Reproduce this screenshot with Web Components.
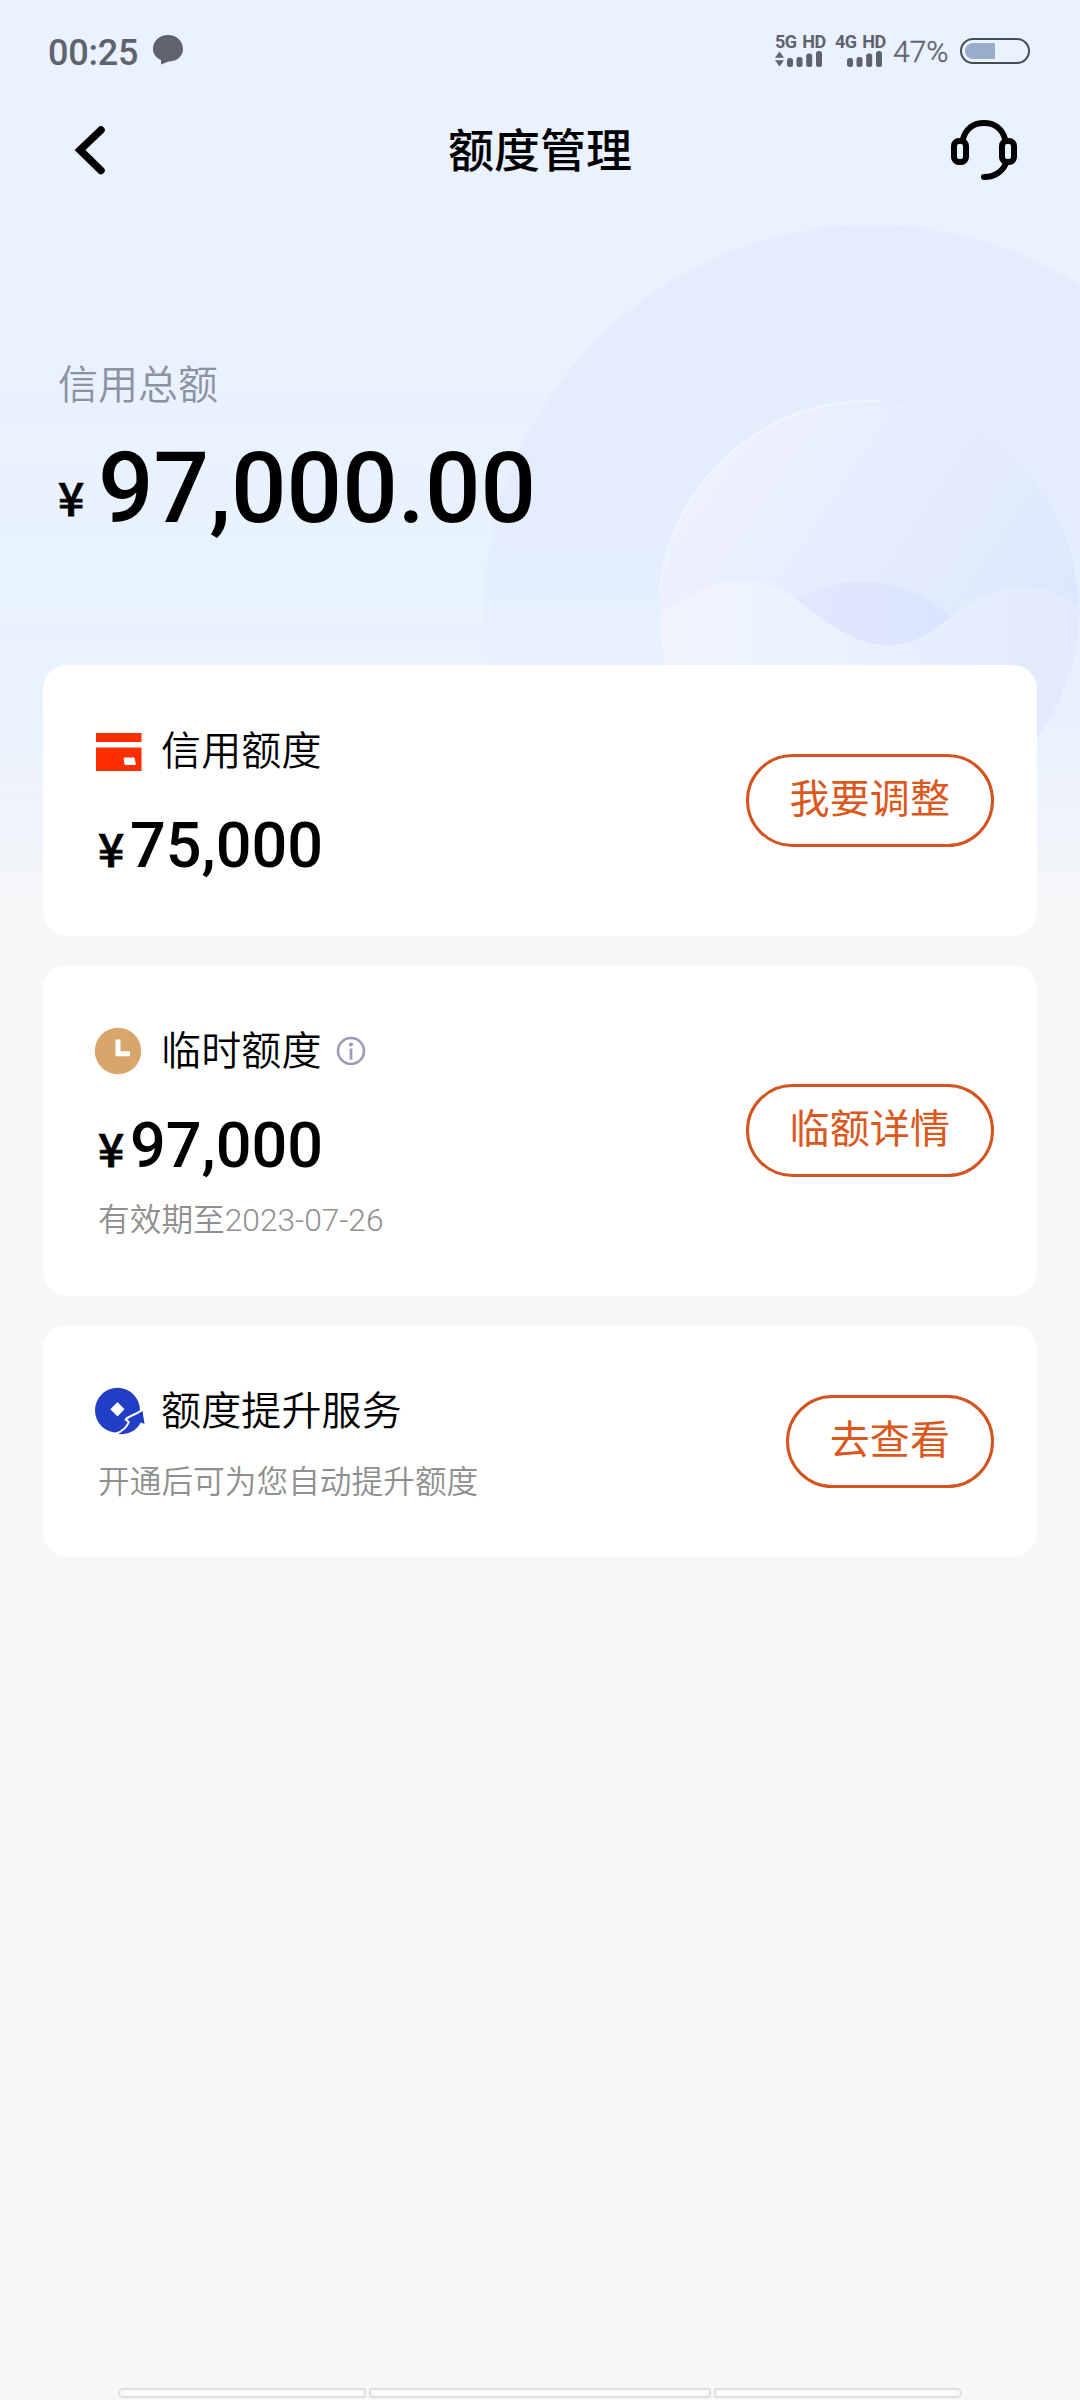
<!DOCTYPE html>
<html lang="zh-CN">
<head>
<meta charset="utf-8">
<title>额度管理</title>
<style>
html,body{margin:0;padding:0;background:#f7f7f7}
body{width:1080px;height:2400px;overflow:hidden;font-family:Roboto,"Noto Sans CJK SC",sans-serif;color:#000}
</style>
</head>
<body>
<limit-page></limit-page>
<script>
const define=(name,html)=>{
  const t=document.createElement('template');
  t.innerHTML=html;
  customElements.define(name,class extends HTMLElement{
    constructor(){super();this.attachShadow({mode:'open'}).append(t.content.cloneNode(true));}
  });
};

define('signal-meter',`
<style>
:host{display:flex;flex-direction:column;width:50px;color:#5f636d}
span{font:700 18px/17px Roboto,sans-serif;white-space:nowrap;letter-spacing:-.6px;word-spacing:2px;padding-left:1px}
svg{display:block}
.up{display:none}
:host([data]) .up{display:block}
</style>
<span><slot></slot></span>
<svg width="50" height="19" viewBox="0 0 50 19" fill="currentColor">
<path class="up" d="M5.500 1.500l4.500 6.300h-9zM5.500 16.500l4.500-6.300h-9z"/>
<rect x="13" y="8" width="6" height="9" rx="2.500"/><rect x="22.500" y="7" width="6" height="10" rx="2.500"/><rect x="32.200" y="3.500" width="6" height="13.500" rx="2.500"/><rect x="42" y="1" width="6" height="16" rx="2.500"/>
</svg>`);

define('status-bar',`
<style>
:host{display:flex;height:100px;box-sizing:border-box;padding:2px 50px 0 48px;align-items:center;color:#5f636d}
.time{font:500 36px/40px Roboto,sans-serif;width:105px;letter-spacing:-.2px;margin-top:3px}
.chat{margin-bottom:2px}
.right{display:flex;align-items:center;margin-left:auto}
signal-meter{margin-top:-1px;margin-right:10px}
.pct{font:300 30px/34px Roboto,sans-serif;width:67px;margin-top:2px;margin-left:-1px;-webkit-text-stroke:.4px}
</style>
<span class="time">00:25</span>
<svg class="chat" width="30" height="30" viewBox="0 0 30 30" fill="#5f636d"><path d="M15 0C6.500 0 0 6 0 14c0 4.800 2.800 8.800 8 11v4.500l7.500-3C24 26.500 30 21 30 14 30 6 23.500 0 15 0z"/></svg>
<div class="right">
<signal-meter data>5G HD</signal-meter><signal-meter>4G HD</signal-meter>
<span class="pct">47%</span>
<svg width="70" height="26" viewBox="0 0 70 26"><rect x="1" y="1" width="68" height="24" rx="12" fill="none" stroke="#474b54" stroke-width="2"/><path d="M13 5H35V21H13A8 8 0 0 1 13 5z" fill="#99acc9"/></svg>
</div>`);

define('nav-header',`
<style>
:host{display:flex;height:100px;align-items:center;justify-content:space-between;padding:0 62px 0 70px}
h1{margin:1px 0 0;font:500 46px/60px Roboto,"Noto Sans CJK SC",sans-serif;white-space:nowrap;padding-right:8px}
svg{display:block}
.side{width:68px}
</style>
<div class="side"><svg width="40" height="60" viewBox="0 0 40 60" fill="none" stroke="#000" stroke-width="7.500" stroke-linecap="round"><path d="M31 10L10 30l21 20.500"/></svg></div>
<h1><slot></slot></h1>
<div class="side"><svg width="68" height="64" viewBox="0 0 68 64" fill="none" stroke="#000" stroke-width="6" stroke-linecap="round"><rect x="4" y="23" width="12" height="21" rx="5"/><rect x="52" y="23" width="12" height="21" rx="5"/><path d="M13 21C16 10 24 5 34 5s18 5 21 16M56 45C53 53 45 59 34 59"/></svg></div>`);

define('total-credit',`
<style>
:host{display:block;height:465px;box-sizing:border-box;padding:156px 0 0 58px}
.label{font:350 40px/60px Roboto,"Noto Sans CJK SC",sans-serif;color:#8b92a1}
.sum{display:flex;align-items:baseline;font:500 97.800px/110px Roboto,sans-serif;margin-top:18px;white-space:nowrap}
.yen{font:500 46px/60px "Noto Sans CJK SC",sans-serif;width:40px;align-self:end;margin-bottom:18px;-webkit-text-stroke:.8px}
</style>
<div class="label"><slot name="label"></slot></div>
<div class="sum"><span class="yen">¥</span><span><slot></slot></span></div>`);

define('pill-button',`
<style>
:host{display:block}
button{display:block;box-sizing:border-box;height:93px;border:3px solid #d3541f;border-radius:47px;background:none;padding:0 41px 3px;margin:0;color:#dc571b;font:400 40px/85px Roboto,"Noto Sans CJK SC",sans-serif;white-space:nowrap;letter-spacing:.1px}
</style>
<button><slot></slot></button>`);

define('limit-card',`
<style>
:host{display:flex;box-sizing:border-box;width:994px;margin:0 auto 29px;height:var(--h);background:#fff;border-radius:24px;padding:55px 43px 0 49px;justify-content:space-between}
.info{display:flex;flex-direction:column}
.head{display:flex;align-items:center;height:60px;font:350 40px/60px Roboto,"Noto Sans CJK SC",sans-serif;white-space:nowrap;letter-spacing:.15px}
.title{padding-top:3px}
.icon{display:flex;width:69px}
.tip{display:flex;margin-left:14px}
.act{align-self:center;margin-top:-55px}
::slotted(amount-line){margin-top:36px}
::slotted(p){margin:21px 0 0 6px;font:350 31.700px/48px Roboto,"Noto Sans CJK SC",sans-serif;color:#8f8f8f;white-space:nowrap}
:host([plain]) ::slotted(p){margin-top:19px}
</style>
<div class="info"><div class="head"><span class="icon"><slot name="icon"></slot></span><span class="title"><slot name="title"></slot></span><span class="tip"><slot name="tip"></slot></span></div><slot></slot></div>
<div class="act"><slot name="action"></slot></div>`);

define('amount-line',`
<style>
:host{display:flex;align-items:baseline;height:60px;padding-left:6px;font:500 63px/60px Roboto,sans-serif;white-space:nowrap}
.yen{font:500 46px/40px "Noto Sans CJK SC",sans-serif;width:32px;-webkit-text-stroke:.8px}
</style>
<span class="yen">¥</span><span><slot></slot></span>`);

define('hero-art',`
<style>:host{display:block;position:absolute;inset:0 0 auto 0;z-index:-1}svg{display:block}</style>
<svg width="1080" height="960" viewBox="0 0 1080 960">
<defs>
<linearGradient id="bg" x2="0" y2="1"><stop stop-color="#eaf1ff"/><stop offset=".38" stop-color="#eaf1ff"/><stop offset=".6" stop-color="#e7f3ff"/><stop offset=".72" stop-color="#eaf2ff"/><stop offset=".86" stop-color="#f0f4fb"/><stop offset=".97" stop-color="#f7f7f7"/></linearGradient>
<linearGradient id="ring" x2="0" y2="1"><stop stop-color="#e3edfd"/><stop offset=".35" stop-color="#e3edfe"/><stop offset=".55" stop-color="#e5effe" stop-opacity=".6"/><stop offset=".85" stop-color="#f0f4fb" stop-opacity="0"/></linearGradient>
<linearGradient id="ball" x1=".15" y1=".15" x2=".9" y2=".65"><stop stop-color="#edf0fe"/><stop offset=".5" stop-color="#e4edfe"/><stop offset="1" stop-color="#dce7fd"/></linearGradient>
<linearGradient id="wave"><stop stop-color="#f1f4ff"/><stop offset=".35" stop-color="#ebf3ff"/><stop offset="1" stop-color="#e1eafe"/></linearGradient>
<linearGradient id="back"><stop stop-color="#e1e8fe"/><stop offset="1" stop-color="#dae4fe"/></linearGradient>
<clipPath id="c"><circle cx="869" cy="611" r="210"/></clipPath>
</defs>
<rect width="1080" height="960" fill="url(#bg)"/>
<circle cx="872" cy="613" r="388" fill="url(#ring)"/>
<g clip-path="url(#c)">
<circle cx="869" cy="611" r="210" fill="url(#ball)"/>
<path d="M780 610C830 573 900 566 960 625L940 670H820z" fill="url(#back)"/>
<path d="M650 622C690 592 725 570 770 586C812 601 838 645 889 645C943 645 958 587 1024 587C1047 587 1064 595 1085 610V830H650z" fill="url(#wave)"/>
</g>
<path d="M660 592A210 210 0 0 1 880 401" fill="none" stroke="#eff5ff" stroke-width="2.500"/>
</svg>`);

define('gesture-bar',`
<style>
:host{display:flex;gap:3px;width:844px;height:10px;margin:auto auto 2px 118px}
i{box-sizing:border-box;height:10px;border:2px solid #dfdfdf;background:#fbfbfb;border-radius:3px;flex:248}
.l{border-radius:5px 3px 3px 5px}
.m{flex:342}
.r{border-radius:3px 5px 5px 3px}
</style><i class="l"></i><i class="m"></i><i class="r"></i>`);

define('limit-page',`
<style>
:host{display:flex;flex-direction:column;position:relative;isolation:isolate;width:1080px;height:2400px;background:#f7f7f7}
svg{display:block}
</style>
<hero-art></hero-art>
<status-bar></status-bar>
<nav-header>额度管理</nav-header>
<total-credit><span slot="label">信用总额</span>97,000.00</total-credit>
<limit-card style="--h:271px">
<svg slot="icon" width="56" height="56" viewBox="0 0 56 56" fill="#ff2e00"><path d="M4 11h45.500v9H4zM4 25.500h45.500v23.500H4z"/><path d="M32 36h10l1.500 6.500h-10.500z" fill="#fff" stroke="#fff" stroke-linejoin="round"/></svg>
<span slot="title">信用额度</span>
<amount-line>75,000</amount-line>
<pill-button slot="action">我要调整</pill-button>
</limit-card>
<limit-card style="--h:331px">
<svg slot="icon" width="56" height="56" viewBox="0 0 56 56"><circle cx="26" cy="29" r="23.200" fill="#d8a56b"/><path d="M26 17.500V31.800H38" fill="none" stroke="#fff" stroke-width="5"/></svg>
<span slot="title">临时额度</span>
<svg slot="tip" width="30" height="30" viewBox="0 0 30 30"><circle cx="15" cy="16" r="13" fill="none" stroke="#9b99b9" stroke-width="2.500"/><circle cx="15" cy="9.500" r="2" fill="#9b99b9"/><path d="M15 13.500V24.500" stroke="#9b99b9" stroke-width="2.800"/></svg>
<amount-line>97,000</amount-line>
<p>有效期至2023-07-26</p>
<pill-button slot="action">临额详情</pill-button>
</limit-card>
<limit-card plain style="--h:232px">
<svg slot="icon" width="56" height="56" viewBox="0 0 56 56"><circle cx="25.500" cy="28.300" r="22.500" fill="#213fc4"/><path d="M25.500 20l7 7.300-7 7.300-7.200-7.300z" fill="#fff"/><path d="M26 52C33 49 37 44 37.500 40L34.500 37.500C37 34 43 34 50.500 28.700L52.500 42 48.700 40.500C45 48 37 53 26 52z" fill="#213fc4"/><path d="M24 51.500C31 49 35 45 36.800 40L33.700 37.500C37 33.500 43 33.500 50 28" fill="none" stroke="#fff" stroke-width="2"/></svg>
<span slot="title">额度提升服务</span>
<p>开通后可为您自动提升额度</p>
<pill-button slot="action">去查看</pill-button>
</limit-card>
<gesture-bar></gesture-bar>`);
</script>
</body>
</html>
